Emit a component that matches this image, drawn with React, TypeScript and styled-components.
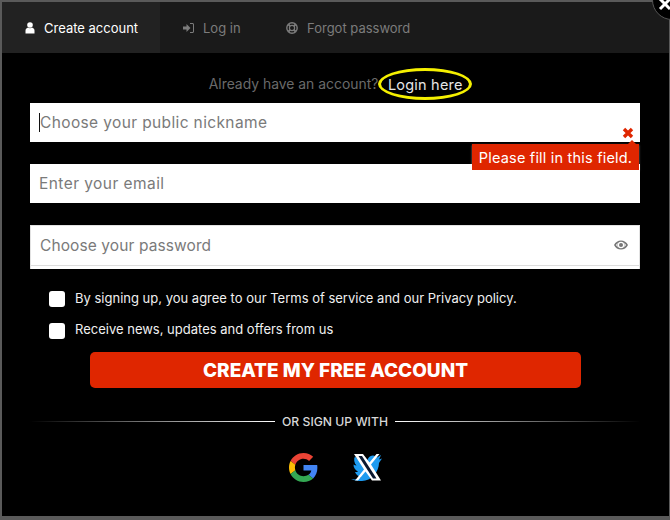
import React from "react";
import styled, { createGlobalStyle } from "styled-components";

const Global = createGlobalStyle`
  html, body { margin: 0; padding: 0; width: 670px; height: 520px; overflow: hidden; background: #5a5a5a; }
  * { box-sizing: border-box; }
`;

const FONT = `"Inter", "Open Sans", sans-serif`;

const Modal = styled.div`
  position: relative;
  margin: 2px 0 0 2px;
  width: 667px;
  height: 514px;
  background: #000;
  font-family: ${FONT};
  color: #fff;
`;
const Close = styled.div`
  position: absolute;
  top: -22px;
  right: -23px;
  width: 40px;
  height: 40px;
  border-radius: 50%;
  background: #000;
  border: 1px solid #555;
  svg { position: absolute; left: 5px; top: 16px; }
`;
const Tabs = styled.div`
  display: flex;
  height: 51px;
  background: #1a1a1a;
`;
const Tab = styled.div<{ $active?: boolean; $width: number; $pad: number }>`
  display: flex;
  align-items: center;
  height: 100%;
  width: ${(p) => p.$width}px;
  padding-left: ${(p) => p.$pad}px;
  gap: 9px;
  font-size: 13px;
  background: ${(p) => (p.$active ? "#222" : "transparent")};
  color: ${(p) => (p.$active ? "#fff" : "#7c7c7c")};
`;
const Body = styled.div`
  padding: 0 29px 0 28px;
`;
const HaveAccount = styled.div`
  display: flex;
  justify-content: center;
  align-items: center;
  height: 50px;
  padding: 12px 0 0 11px;
  font-size: 13.9px;
  color: #6a6a6a;
`;
const LoginHere = styled.span`
  display: inline-flex;
  align-items: center;
  justify-content: center;
  width: 94px;
  height: 32px;
  font-size: 14.5px;
  letter-spacing: 0.2px;
  color: #e6e6e6;
  border: 3px solid #f5f000;
  border-radius: 50%;
`;
const Field = styled.div<{ $h: number; $mb: number; $ls: number }>`
  position: relative;
  display: flex;
  align-items: center;
  height: ${(p) => p.$h}px;
  margin-bottom: ${(p) => p.$mb}px;
  background: #fff;
  padding-left: 9px;
  font-size: 15.5px;
  letter-spacing: ${(p) => p.$ls}px;
  color: #7a7a7a;
`;
const PasswordField = styled(Field)`
  border: 1px solid #e2e2e2;
  border-bottom: 0;
  padding-bottom: 5px;
  background: linear-gradient(to top, #fff 3px, #ddd 3px, #ddd 4px, #fff 4px);
`;
const Caret = styled.span`
  width: 1px;
  height: 19px;
  background: #111;
`;
const Eye = styled.svg`
  position: absolute;
  right: 11px;
  top: 14px;
`;
const Cross = styled.svg`
  position: absolute;
  right: 6px;
  top: 24px;
`;
const Tooltip = styled.div`
  position: absolute;
  top: 41px;
  right: 1px;
  width: 167px;
  height: 26px;
  background: #df2600;
  color: #fff;
  display: flex;
  align-items: center;
  justify-content: center;
  font-size: 14.5px;
  letter-spacing: 0.2px;
  box-shadow: 0 1px 2px rgba(255,255,255,.5);
  z-index: 2;
  &::before {
    content: "";
    position: absolute;
    top: -4px;
    right: 3px;
    border: 4px solid transparent;
    border-top: 0;
    border-bottom-color: #df2600;
  }
`;
const CheckRow = styled.label<{ $mb: number }>`
  display: flex;
  align-items: center;
  gap: 10px;
  height: 16px;
  margin: 0 0 ${(p) => p.$mb}px 19px;
  font-size: 13px;
  color: #f0f0f0;
`;
const CheckText = styled.span<{ $lift: number }>`
  padding-bottom: ${(p) => p.$lift}px;
`;
const Box = styled.span`
  width: 16px;
  height: 16px;
  border-radius: 3px;
  background: #fff;
`;
const Submit = styled.div`
  width: 491px;
  height: 36px;
  margin: 0 0 0 60px;
  border-radius: 5px;
  background: #df2600;
  display: flex;
  align-items: center;
  justify-content: center;
  font-size: 19px;
  font-weight: 800;
  color: #fff;
`;
const Divider = styled.div`
  display: flex;
  align-items: center;
  gap: 7px;
  margin-top: 26px;
  font-size: 12.2px;
  font-weight: 500;
  color: #d8d8d8;
`;
const Line = styled.span<{ $dir: string }>`
  flex: 1;
  height: 1px;
  background: linear-gradient(${(p) => p.$dir}, #000, #fff);
`;
const Socials = styled.div`
  display: flex;
  justify-content: center;
  gap: 33px;
  margin-top: 24px;
`;

const User = () => (
  <svg width="10" height="12" viewBox="0 0 10 12" fill="currentColor"><circle cx="5" cy="3" r="2.8" /><path d="M0.5 11.5 V8.5 C0.5 6.8 2 6 3 5.6 C4 6.4 6 6.4 7 5.6 C8 6 9.5 6.8 9.5 8.5 V11.5 Z" /></svg>
);
const SignIn = () => (
  <svg width="11" height="10" viewBox="0 0 11 10" fill="currentColor"><path d="M0 3.5H3.5V1L7.5 5 3.5 9V6.5H0Z" /><path d="M7 0H9.5C10.3 0 11 .7 11 1.5V8.5C11 9.3 10.3 10 9.5 10H7V9H9.5C9.8 9 10 8.8 10 8.5V1.5C10 1.2 9.8 1 9.5 1H7Z" /></svg>
);
const Lifebuoy = () => (
  <svg width="12" height="12" viewBox="0 0 12 12" fill="none" stroke="currentColor"><circle cx="6" cy="6" r="5.2" strokeWidth="1.4" /><circle cx="6" cy="6" r="2.6" strokeWidth="1.2" /><path d="M2.4 2.4L4.2 4.2M9.6 2.4L7.8 4.2M2.4 9.6L4.2 7.8M9.6 9.6L7.8 7.8" strokeWidth="2" /></svg>
);

export default function App() {
  return (
    <>
      <Global />
      <Modal>
        <Close>
          <svg width="14" height="14" viewBox="0 0 14 14"><path d="M2 2L12 12M12 2L2 12" stroke="#fff" strokeWidth="3" /></svg>
        </Close>
        <Tabs>
          <Tab $active $width={158} $pad={23}><User />Create account</Tab>
          <Tab $width={102} $pad={23}><SignIn />Log in</Tab>
          <Tab $width={200} $pad={24}><Lifebuoy />Forgot password</Tab>
        </Tabs>
        <Body>
          <HaveAccount>Already have an account?<LoginHere>Login here</LoginHere></HaveAccount>
          <Field $h={39} $mb={22} $ls={0.37}>
            <Caret />Choose your public nickname
            <Cross width="12" height="12" viewBox="0 0 12 12"><path d="M2 2L10 10M10 2L2 10" stroke="#df2600" strokeWidth="3.4" /></Cross>
            <Tooltip>Please fill in this field.</Tooltip>
          </Field>
          <Field $h={39} $mb={22} $ls={0.44}>Enter your email</Field>
          <PasswordField $h={44} $mb={22} $ls={0.1}>
            Choose your password
            <Eye width="14" height="10" viewBox="0 0 14 10"><path fillRule="evenodd" fill="#777" d="M0 5C1.500 2 4 .5 7 .5S12.500 2 14 5C12.500 8 10 9.500 7 9.500S1.500 8 0 5ZM7 1.800A3.200 3.200 0 1 0 7 8.200 3.200 3.200 0 0 0 7 1.800ZM2 5C2.600 6 3.200 6.700 4 7.200 3.400 6.300 3.200 3.700 4 2.800 3.200 3.300 2.600 4 2 5ZM10 2.800C10.800 3.700 10.600 6.300 10 7.200 10.800 6.700 11.400 6 12 5 11.400 4 10.800 3.300 10 2.800Z" /><circle cx="7" cy="5" r="2" fill="#777" /></Eye>
          </PasswordField>
          <CheckRow $mb={16}><Box /><CheckText $lift={2}>By signing up, you agree to our Terms of service and our Privacy policy.</CheckText></CheckRow>
          <CheckRow $mb={13}><Box /><CheckText $lift={4}>Receive news, updates and offers from us</CheckText></CheckRow>
          <Submit>CREATE MY FREE ACCOUNT</Submit>
          <Divider><Line $dir="to right" />OR SIGN UP WITH<Line $dir="to left" /></Divider>
          <Socials>
            <svg width="29" height="29" viewBox="0 0 48 48">
              <path fill="#EA4335" d="M24 9.500c3.540 0 6.710 1.220 9.210 3.600l6.850-6.850C35.900 2.380 30.470 0 24 0 14.620 0 6.510 5.380 2.560 13.220l7.980 6.190C12.430 13.720 17.740 9.500 24 9.500z" />
              <path fill="#4285F4" d="M46.980 24.550c0-1.570-.15-3.090-.38-4.550H24v9.020h12.940c-.58 2.960-2.260 5.480-4.780 7.180l7.730 6c4.510-4.180 7.090-10.360 7.090-17.650z" />
              <path fill="#FBBC05" d="M10.530 28.590c-.48-1.450-.76-2.990-.76-4.590s.27-3.140.76-4.590l-7.980-6.190C.92 16.460 0 20.120 0 24c0 3.880.92 7.540 2.560 10.780l7.970-6.190z" />
              <path fill="#34A853" d="M24 48c6.480 0 11.930-2.130 15.890-5.810l-7.730-6c-2.150 1.450-4.920 2.300-8.160 2.300-6.260 0-11.570-4.220-13.470-9.910l-7.980 6.190C6.510 42.620 14.620 48 24 48z" />
            </svg>
            <svg width="31" height="29" viewBox="0 0 31 29">
              <path fill="#1d9bf0" d="M0 26C4 27 8 26 10 24 7 23.500 5 21.500 4 19 5.500 19 6.500 19 7 18.500 4 17 2.500 14.500 2.500 11.500 3.500 12 4.500 12.500 5.500 12.500 3 10 2.500 6 4 3.500 8 8 12 10 16 10.500 15.500 7 18 2.500 22 2.500 24 2.500 25 3.500 26 4.500L30 2 28 6.500 31 5.500C29.500 8 28.500 9 28 10 28 19 20 28 11 28 7 28 3 27.500 0 26Z" />
              <path fill="#fff" d="M3 1H12L18.500 9.500 25.500 1H28.500L20 11.500 30 27.500H21L14.500 18.500 7 27.500H4L13 16.500Z" />
              <path fill="#0a1830" d="M7.500 3H11L25.500 25.500H22Z" />
            </svg>
          </Socials>
        </Body>
      </Modal>
    </>
  );
}
